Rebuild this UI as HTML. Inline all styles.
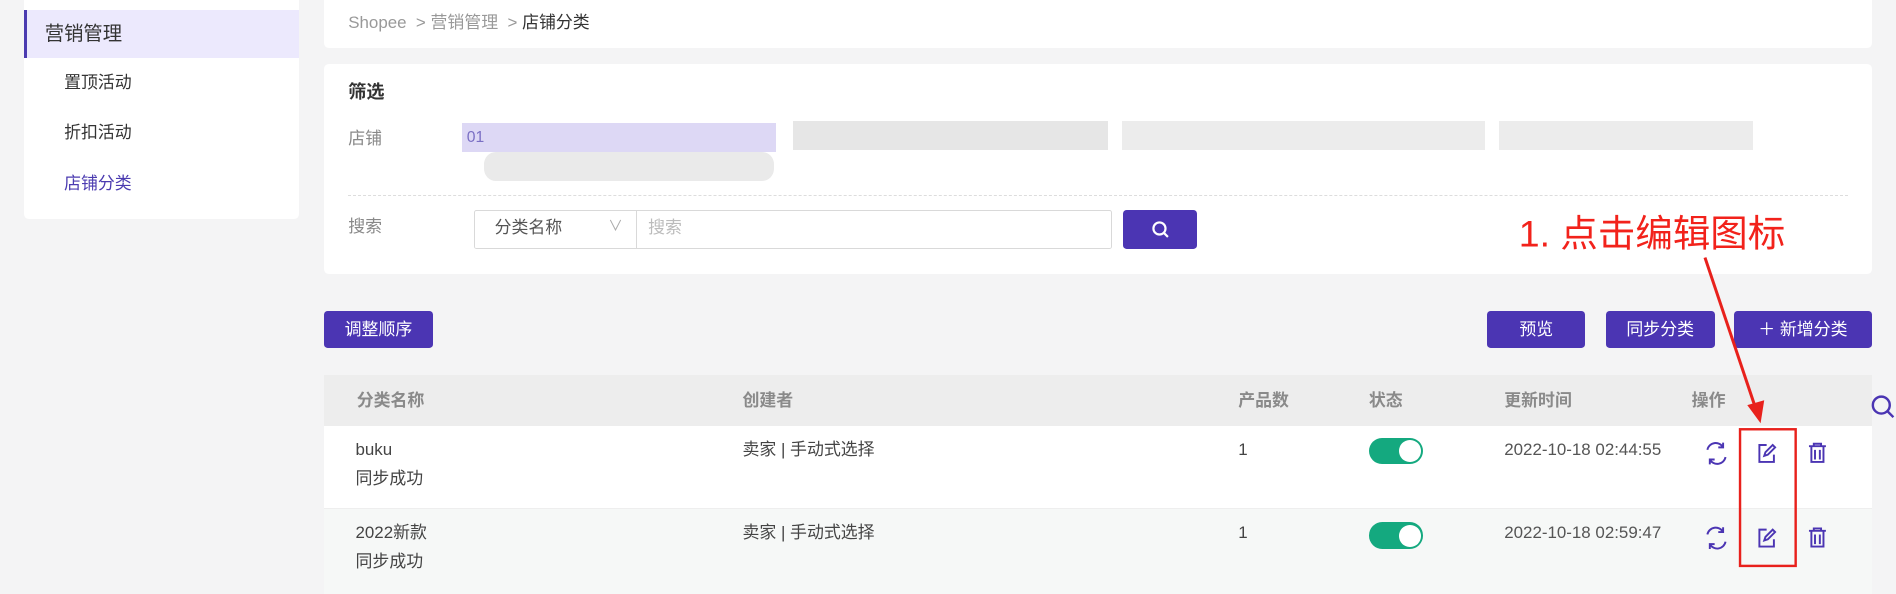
<!DOCTYPE html>
<html><head><meta charset="utf-8">
<style>
html,body{margin:0;padding:0;}
body{width:1896px;height:592px;overflow:hidden;background:#f4f4f5;font-family:"Liberation Sans","Noto Sans CJK SC",sans-serif;}
#w{zoom:1.2092;position:relative;width:1568px;height:490px;}
.a{position:absolute;white-space:nowrap;line-height:20px;}
.card{position:absolute;background:#fff;border-radius:4px;}
.btn{position:absolute;background:#4b35b3;color:#fff;border-radius:3px;font-size:14px;text-align:center;line-height:31px;height:31px;}
.th{position:absolute;top:322px;font-size:14px;font-weight:bold;color:#8a8a8a;line-height:20px;}
.td{position:absolute;font-size:14px;color:#444;line-height:20px;}
.tg{position:absolute;width:45px;height:22px;border-radius:11px;background:#14a97f;}
.tg:after{content:"";position:absolute;right:2px;top:2px;width:18px;height:18px;border-radius:50%;background:#fff;}
.blk{position:absolute;background:#e2e2e2;}
</style></head><body><div id="w">
<div class="card" style="left:20px;top:-4px;width:227px;height:185px;"></div>
<div class="a" style="left:20px;top:8px;width:227px;height:40px;background:#ece9fd;border-left:3px solid #4b3bb0;box-sizing:border-box;"></div>
<div class="a" style="left:37px;top:18px;font-size:16px;color:#333;">营销管理</div>
<div class="a" style="left:53px;top:59px;font-size:14px;color:#333;">置顶活动</div>
<div class="a" style="left:53px;top:100px;font-size:14px;color:#333;">折扣活动</div>
<div class="a" style="left:53px;top:142px;font-size:14px;color:#4b3bb0;">店铺分类</div>

<div class="card" style="left:268px;top:-4px;width:1280px;height:44px;"></div>
<div class="a" style="left:288px;top:9px;font-size:14px;color:#999;">Shopee &nbsp;&gt; 营销管理 &nbsp;&gt; <span style="color:#333">店铺分类</span></div>

<div class="card" style="left:268px;top:53px;width:1280px;height:174px;"></div>
<div class="a" style="left:288px;top:66px;font-size:15px;font-weight:bold;color:#333;">筛选</div>
<div class="a" style="left:288px;top:105px;font-size:14px;color:#888;">店铺</div>
<div class="a" style="left:382px;top:102px;width:260px;height:24px;background:#ddd8f5;"></div>
<div class="a" style="left:386px;top:104px;font-size:13px;color:#7a6fc4;">01</div>
<div class="blk" style="left:400px;top:126px;width:240px;height:24px;background:#eaeaea;border-radius:10px;"></div>
<div class="blk" style="left:656px;top:100px;width:260px;height:24px;background:#e6e6e6;"></div>
<div class="blk" style="left:928px;top:100px;width:300px;height:24px;background:#ececec;"></div>
<div class="blk" style="left:1240px;top:100px;width:210px;height:24px;background:#ececec;"></div>
<div class="a" style="left:288px;top:161px;width:1240px;border-top:1px dashed #ddd;"></div>
<div class="a" style="left:288px;top:178px;font-size:14px;color:#888;">搜索</div>
<div class="a" style="left:392px;top:174px;width:528px;height:32px;border:1px solid #d9d9d9;box-sizing:border-box;border-radius:2px;"></div>
<div class="a" style="left:526px;top:174px;height:32px;border-left:1px solid #d9d9d9;"></div>
<div class="a" style="left:409px;top:179px;font-size:14px;color:#555;">分类名称</div>
<div class="a" style="left:503px;top:178px;font-size:12px;color:#aaa;">∨</div>
<div class="a" style="left:536px;top:179px;font-size:14px;color:#bbb;">搜索</div>
<div class="btn" style="left:929px;top:174px;width:61px;height:32px;">
<svg width="16" height="16" viewBox="0 0 16 16" style="margin-top:8px"><circle cx="7" cy="7" r="5" fill="none" stroke="#fff" stroke-width="1.8"/><path d="M10.8 10.8L14 14" stroke="#fff" stroke-width="1.8"/></svg></div>

<div class="btn" style="left:268px;top:257px;width:90px;">调整顺序</div>
<div class="btn" style="left:1230px;top:257px;width:81px;">预览</div>
<div class="btn" style="left:1328px;top:257px;width:90px;">同步分类</div>
<div class="btn" style="left:1434px;top:257px;width:114px;">＋ 新增分类</div>

<div class="a" style="left:268px;top:310px;width:1280px;height:42px;background:#ededed;"></div>
<div class="th" style="left:295px">分类名称</div>
<div class="th" style="left:614px">创建者</div>
<div class="th" style="left:1024px">产品数</div>
<div class="th" style="left:1132px">状态</div>
<div class="th" style="left:1244px">更新时间</div>
<div class="th" style="left:1399px">操作</div>
<svg class="a" style="left:1545px;top:325px" width="23" height="22"><circle cx="11" cy="10" r="7" fill="none" stroke="#4b35b3" stroke-width="2"/><path d="M16 15l5 5" stroke="#4b35b3" stroke-width="2"/></svg>

<div class="a" style="left:268px;top:352px;width:1280px;height:68px;background:#fff;"></div>
<div class="a" style="left:268px;top:420px;width:1280px;height:70px;background:#f6f8f7;border-top:1px solid #eee;"></div>

<div class="td" style="left:294px;top:362px">buku</div>
<div class="td" style="left:294px;top:386px">同步成功</div>
<div class="td" style="left:614px;top:362px">卖家 | 手动式选择</div>
<div class="td" style="left:1024px;top:362px">1</div>
<div class="tg" style="left:1132px;top:362px"></div>
<div class="td" style="left:1244px;top:362px;color:#555">2022-10-18 02:44:55</div>

<div class="td" style="left:294px;top:431px">2022新款</div>
<div class="td" style="left:294px;top:455px">同步成功</div>
<div class="td" style="left:614px;top:431px">卖家 | 手动式选择</div>
<div class="td" style="left:1024px;top:431px">1</div>
<div class="tg" style="left:1132px;top:432px"></div>
<div class="td" style="left:1244px;top:431px;color:#555">2022-10-18 02:59:47</div>

<svg class="a" style="left:0;top:0" width="1568" height="490">
<g id="ic" fill="none" stroke="#4b35b3" stroke-width="1.6">
<path d="M1412 372a7 7 0 0 1 13-2M1427 378a7 7 0 0 1-13 2M1425 366v4h-4M1414 384v-4h4"/>
<path d="M1461 368h-6v14h12v-6M1459 377l1-3 6-6 2 2-6 6z"/>
<path d="M1496 369h14M1500 369v-2h6v2M1498 369v13h10v-13M1501 372v8M1505 372v8"/>
</g>
<use href="#ic" transform="translate(0,70)"/>
<rect x="1439" y="355" width="46" height="113" fill="none" stroke="#e8211c" stroke-width="2"/>
<path d="M1410 213L1452 338" stroke="#e8211c" stroke-width="2.5"/>
<path d="M1445 335L1456 350L1459 331Z" fill="#e8211c"/>
<text x="1256" y="204" font-size="31" fill="#f2221b" font-family="Liberation Sans, Noto Sans CJK SC, sans-serif">1. 点击编辑图标</text>
</svg>
</div></body></html>
